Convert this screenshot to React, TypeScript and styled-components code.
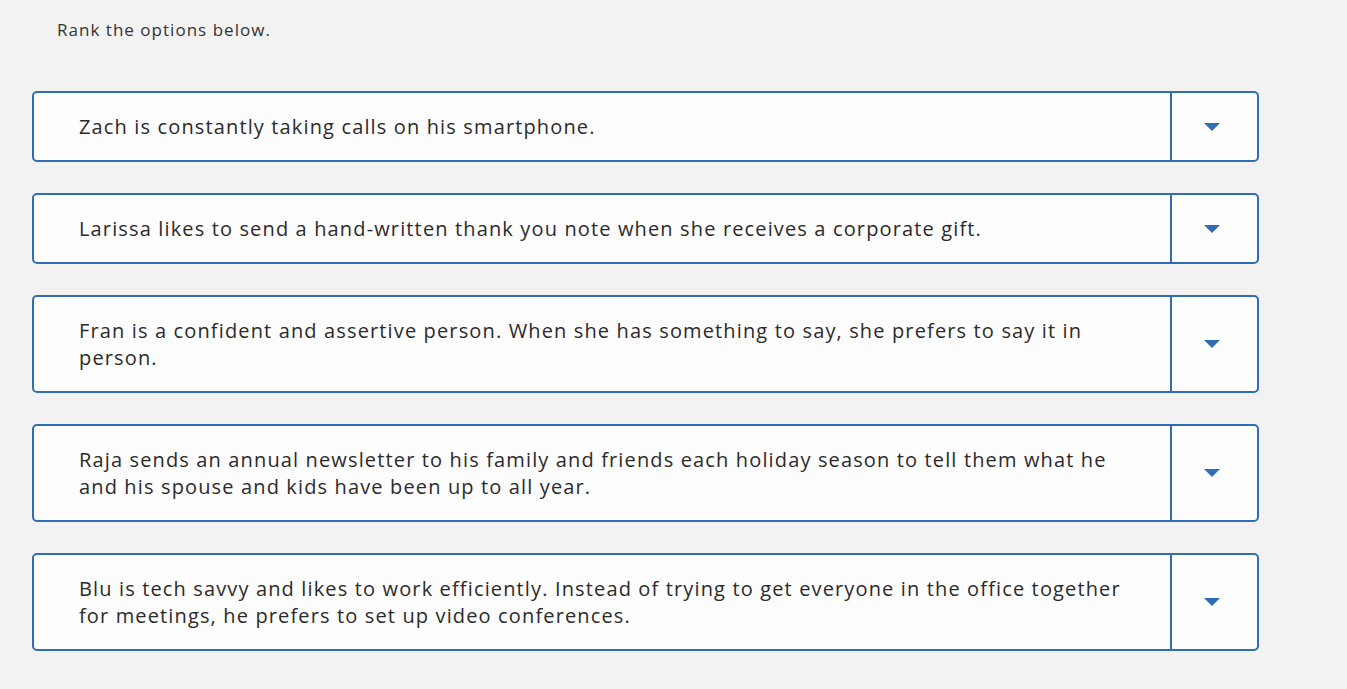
import React from "react";
import styled, { createGlobalStyle } from "styled-components";

const Global = createGlobalStyle`
  html, body { margin: 0; padding: 0; }
  body {
    background: #f3f2f3;
    font-family: "Open Sans", Arial, sans-serif;
    color: #333;
  }
`;

const Page = styled.div`
  width: 1347px;
  height: 689px;
  box-sizing: border-box;
  padding: 18px 0 0 32px;
`;

const Prompt = styled.p`
  margin: 0 0 50px 25px;
  font-size: 17px;
  line-height: 23px;
  letter-spacing: 0.06em;
  color: #333;
`;

const List = styled.div`
  display: flex;
  flex-direction: column;
  gap: 31px;
  width: 1227px;
`;

const Row = styled.div`
  display: flex;
  border: 2px solid #2f6db5;
  border-radius: 5px;
  background: #fdfdfd;
`;

const Label = styled.div`
  flex: 1;
  padding: 20px 40px 20px 45px;
  font-size: 20px;
  line-height: 27px;
  letter-spacing: 0.057em;
  color: #2b2b2b;
`;

const Toggle = styled.div`
  width: 87px;
  flex: none;
  border-left: 2px solid #2f6db5;
  display: flex;
  align-items: center;
  justify-content: center;
  padding-right: 5px;
  box-sizing: border-box;
`;

const Caret = styled.span`
  width: 0;
  height: 0;
  border-left: 8px solid transparent;
  border-right: 8px solid transparent;
  border-top: 8px solid #2f6db5;
`;

const options = [
  "Zach is constantly taking calls on his smartphone.",
  "Larissa likes to send a hand-written thank you note when she receives a corporate gift.",
  "Fran is a confident and assertive person. When she has something to say, she prefers to say it in person.",
  "Raja sends an annual newsletter to his family and friends each holiday season to tell them what he and his spouse and kids have been up to all year.",
  "Blu is tech savvy and likes to work efficiently. Instead of trying to get everyone in the office together for meetings, he prefers to set up video conferences.",
];

export default function App() {
  return (
    <Page>
      <Global />
      <Prompt>Rank the options below.</Prompt>
      <List>
        {options.map((o) => (
          <Row key={o}>
            <Label>{o}</Label>
            <Toggle>
              <Caret />
            </Toggle>
          </Row>
        ))}
      </List>
    </Page>
  );
}
